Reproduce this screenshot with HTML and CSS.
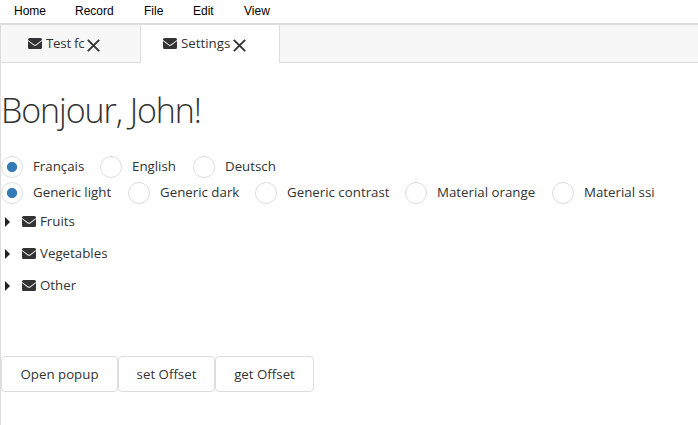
FILE: index.html
```html
<!DOCTYPE html>
<html lang="en">
<head>
<meta charset="utf-8">
<title>Settings</title>
<link rel="stylesheet" href="styles.css">
</head>
<body>
<svg class="defs" width="0" height="0">
  <symbol id="mail" viewBox="0 0 14 11">
    <path d="M1.500 0h11Q14 0 14 1.500V2L8 6.500Q7 7.200 6 6.500L0 2V1.500Q0 0 1.500 0Z"/>
    <path d="M0 3.100l5.500 4.200Q7 8.300 8.500 7.300L14 3.100v6.400Q14 11 12.500 11h-11Q0 11 0 9.500Z"/>
  </symbol>
  <symbol id="close" viewBox="0 0 13 13">
    <path d="M.8.8l11.400 11.400M12.200.8L.8 12.200" fill="none" stroke="currentColor" stroke-width="1.900"/>
  </symbol>
</svg>
<nav class="menu">
  <a class="home">Home</a><a class="record">Record</a><a class="file">File</a><a class="edit">Edit</a><a>View</a>
</nav>
<main class="frame">
  <div class="tabs">
    <div class="tab"><svg class="mail"><use href="#mail"/></svg><span class="t-test">Test fc</span><svg class="close"><use href="#close"/></svg></div>
    <div class="tab active"><svg class="mail"><use href="#mail"/></svg><span class="t-settings">Settings</span><svg class="close"><use href="#close"/></svg></div>
  </div>
  <h1>Bonjour, John!</h1>
  <div class="radios">
    <label class="w-fr"><i class="on"></i><span>Français</span></label>
    <label class="w-en"><i></i><span>English</span></label>
    <label><i></i><span>Deutsch</span></label>
  </div>
  <div class="radios">
    <label class="w-light"><i class="on"></i><span>Generic light</span></label>
    <label class="w-dark"><i></i><span>Generic dark</span></label>
    <label class="w-contrast"><i></i><span>Generic contrast</span></label>
    <label class="w-orange"><i></i><span>Material orange</span></label>
    <label><i></i><span>Material ssi</span></label>
  </div>
  <ul class="tree">
    <li><b></b><svg class="mail"><use href="#mail"/></svg><span>Fruits</span></li>
    <li><b></b><svg class="mail"><use href="#mail"/></svg><span>Vegetables</span></li>
    <li><b></b><svg class="mail"><use href="#mail"/></svg><span>Other</span></li>
  </ul>
  <div class="buttons">
    <button class="b-open">Open popup</button><button class="b-set">set Offset</button><button class="b-get">get Offset</button>
  </div>
</main>
</body>
</html>
```
FILE: styles.css
```css
* { box-sizing: border-box; }
body {
  margin: 0;
  height: 425px;
  overflow: hidden;
  background: #fff;
  color: #333;
  font: 13.300px/20px "Open Sans", "Noto Sans", sans-serif;
  white-space: nowrap;
}
.defs { display: none; }
.menu {
  display: flex;
  height: 25px;
  padding-left: 14px;
  border-bottom: 2px solid #ddd;
  font: 12px/22px "Liberation Sans", Arial, sans-serif;
  color: #000;
}
.home { width: 61px; }
.record { width: 69px; }
.file { width: 49px; }
.edit { width: 51px; }
.frame { height: 400px; border-left: 1px solid #ddd; }
.tabs {
  display: flex;
  height: 38px;
  background: #f7f7f7;
  box-shadow: inset 0 -1px #ddd;
}
.tab {
  display: flex;
  align-items: center;
  width: 139px;
  padding: 0 0 2px 27px;
}
.tab.active {
  width: 140px;
  padding-left: 22px;
  background: #fff;
  border: solid #ddd;
  border-width: 0 1px;
}
.mail { width: 14px; height: 11px; margin-right: 4px; fill: #333; flex: none; }
.close { width: 13px; height: 13px; margin: 5px 0 0 2px; color: #333; flex: none; }
.t-test { width: 39px; letter-spacing: -.25px; }
.t-settings { width: 50px; }
h1 {
  margin: 24px 0 0;
  height: 66px;
  font-size: 34px;
  line-height: 46px;
  font-weight: 300;
  letter-spacing: -1.080px;
}
.radios { display: flex; height: 26px; align-items: center; }
.radios label { display: flex; align-items: center; height: 24px; }
.radios i {
  width: 22px;
  height: 22px;
  margin: 2px 10px 0 0;
  border: 1px solid #ddd;
  border-radius: 50%;
}
.radios .on { background: radial-gradient(circle, #337ab7 4.700px, transparent 5.400px); }
.w-fr { width: 99px; }
.w-en { width: 93px; }
.w-light { width: 127px; }
.w-dark { width: 127px; }
.w-contrast { width: 150px; }
.w-orange { width: 147px; }
.tree { list-style: none; margin: 0; padding: 0; }
.tree li { display: flex; align-items: center; height: 32px; padding-left: 4px; }
.tree b {
  border: solid transparent;
  border-width: 5px 0 5px 5px;
  border-left-color: #222;
  margin: 2px 12px 0 0;
}
.buttons { display: flex; margin-top: 55px; }
button {
  height: 36px;
  padding: 0 0 1px;
  border: 1px solid #ddd;
  border-radius: 4px;
  background: #fff;
  color: #333;
  font: inherit;
}
.b-open { width: 117px; }
.b-set { width: 97px; }
.b-get { width: 99px; }
```
